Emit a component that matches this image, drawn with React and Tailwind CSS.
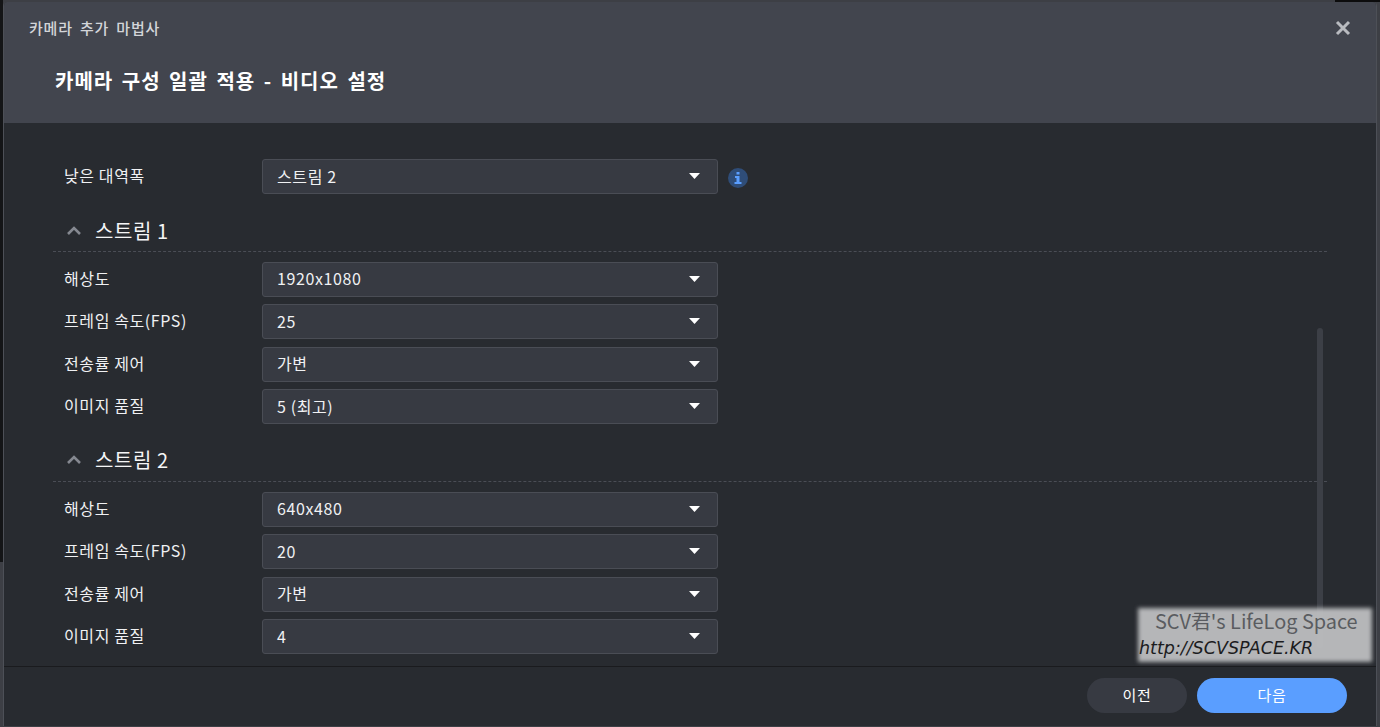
import React from "react";

function Select({ value }) {
  return (
    <div className="w-[456px] h-[35px] shrink-0 flex items-center justify-between pl-[14px] pr-[17px] pb-[1px] bg-[#373a42] border border-[#4a4d55] rounded-[3px] text-[16px] tracking-[0.6px] text-[#f0f1f3]">
      <span className="-mt-[1px]">{value}</span>
      <svg width="11" height="6" viewBox="0 0 11 6"><path d="M0 0h11L5.500 6z" fill="#ffffff" /></svg>
    </div>
  );
}

function Row({ label, value, children }) {
  return (
    <div className="flex items-center">
      <div className="w-[209px] pl-[11px] shrink-0 text-[16px] tracking-[0.6px] text-[#f0f1f3] leading-[20px] -mt-[3px]">{label}</div>
      <Select value={value} />
      {children}
    </div>
  );
}

function Section({ title, rows }) {
  return (
    <div>
      <div className="h-[39px] flex items-center border-b border-dashed border-[#4a4d55] pl-[13px] pb-[3px]">
        <svg width="16" height="10" viewBox="0 0 16 10" className="mr-[13px]"><path d="M2 8l6-6 6 6" fill="none" stroke="#858890" strokeWidth="2.6" /></svg>
        <span className="text-[20px] tracking-[0.6px] text-[#f5f6f7]">{title}</span>
      </div>
      <div className="flex flex-col gap-[7.5px] mt-[9.7px]">
        {rows.map(([l, v]) => <Row key={l} label={l} value={v} />)}
      </div>
    </div>
  );
}

export default function App() {
  return (
    <div className="relative w-[1380px] h-[727px] overflow-hidden bg-[#3d3f45] pt-[2px] pl-[3px] pr-[3px] pb-[1px] font-['Noto_Sans_CJK_KR','Noto_Sans',sans-serif]">
      <div className="absolute left-0 top-0 w-[3px] h-[562px] bg-[#141517]" />
      <div className="absolute left-[1335px] top-0 w-[45px] h-[2px] bg-[#0c0c0d]" />
      <div className="relative h-[724px] flex flex-col border-l border-r border-[#4d5057] rounded-t-[4px] overflow-hidden bg-[#282b30]">
        <div className="h-[121px] shrink-0 bg-[#42454e] relative pl-[25px] pt-[15px]">
          <div className="text-[15px] leading-[22px] font-medium tracking-[0.8px] [word-spacing:3px] text-[#d3d5d9]">카메라 추가 마법사</div>
          <div className="mt-[28px] ml-[26px] text-[20px] leading-[28px] font-bold tracking-[1px] [word-spacing:3px] text-white">카메라 구성 일괄 적용 - 비디오 설정</div>
          <svg width="16" height="16" viewBox="0 0 16 16" className="absolute right-[25px] top-[18px]"><path d="M2 2l12 12M14 2L2 14" stroke="#b9bbc0" strokeWidth="3" /></svg>
        </div>

        <div className="h-[543px] shrink-0 pl-[49px] pr-[49px] pt-[36px] relative">
          <Row label="낮은 대역폭" value="스트림 2">
            <div className="ml-[10px] mt-[3px] w-[20px] h-[20px] rounded-full bg-[#2f4d78] flex items-center justify-center">
              <svg width="8" height="12" viewBox="0 0 8 12"><path d="M2.500 0h3v2.500h-3zM1 4h4.500v6H7.500v2H.5v-2h2V6H1z" fill="#5a9eff" /></svg>
            </div>
          </Row>
          <div className="mt-[19px] flex flex-col gap-[18.800px]">
            <Section title="스트림 1" rows={[["해상도", "1920x1080"], ["프레임 속도(FPS)", "25"], ["전송률 제어", "가변"], ["이미지 품질", "5 (최고)"]]} />
            <Section title="스트림 2" rows={[["해상도", "640x480"], ["프레임 속도(FPS)", "20"], ["전송률 제어", "가변"], ["이미지 품질", "4"]]} />
          </div>
          <div className="absolute left-[1313px] top-[205px] w-[6px] h-[320px] rounded-full bg-[#3c3f46]" />
        </div>

        <div className="flex-1 border-t border-[#1a1b1e] bg-[#282b30] flex items-start justify-end gap-[10px] pt-[11px] pr-[29px]">
          <button className="w-[100px] h-[35px] rounded-full bg-[#373a42] text-[15px] tracking-[0.6px] text-white">이전</button>
          <button className="w-[150px] h-[35px] rounded-full bg-[#5a9eff] text-[15px] tracking-[0.6px] text-white">다음</button>
        </div>
      </div>

      <div className="absolute left-[1138px] top-[608px] w-[234px] h-[54px]">
        <div className="absolute inset-0 bg-[#bdbec0]/95 blur-[2px]" />
        <div className="absolute left-[17px] top-[0px] text-[19.900px] leading-[26px] text-[#5a5c60] whitespace-nowrap">SCV君's LifeLog Space</div>
        <div className="absolute left-[1px] top-[29px] text-[17.500px] leading-[22px] italic text-[#1c1c1e] whitespace-nowrap font-['DejaVu_Sans',cursive]">http://SCVSPACE.KR</div>
      </div>
    </div>
  );
}
